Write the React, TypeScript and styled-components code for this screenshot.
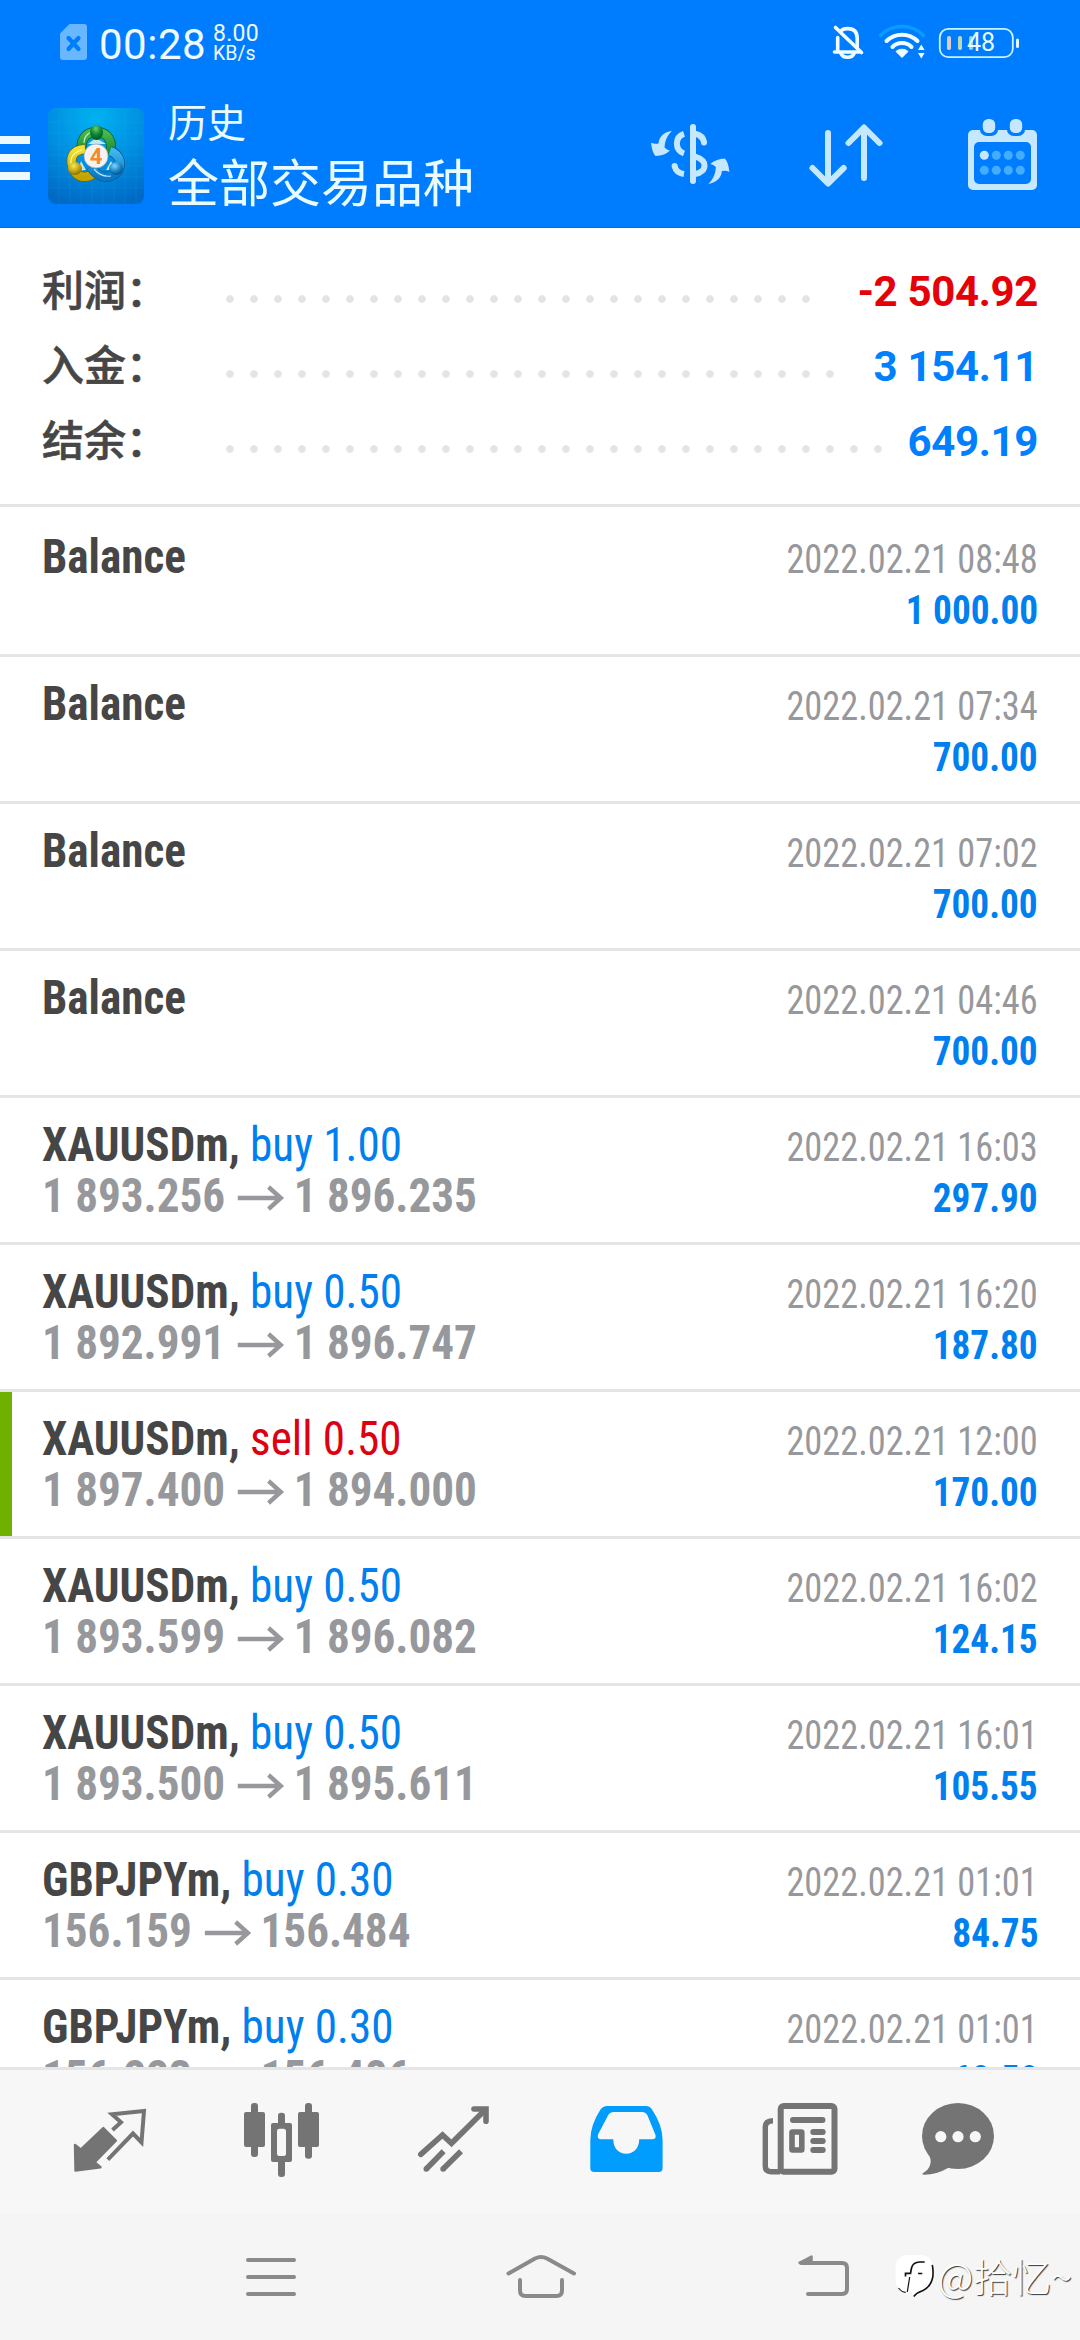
import React from "react";
import styled, { createGlobalStyle } from "styled-components";

const BLUE = "#007fef";
const RED = "#dc0010";
const GRAY = "#97989c";
const LINE = "#e5e5e5";
const ICON_LIGHT = "#c6e8ff";
const TAB_GRAY = "#747474";
const CJK = '"Noto Sans CJK SC", sans-serif';
const CONDENSED = '"Roboto Condensed", Roboto, sans-serif';

const GlobalStyle = createGlobalStyle`
  html, body { margin: 0; padding: 0; background: #ffffff; }
  * { box-sizing: border-box; }
`;

const Screen = styled.div`
  width: 1080px;
  height: 2340px;
  display: flex;
  flex-direction: column;
  overflow: hidden;
  background: #ffffff;
  font-family: Roboto, "Noto Sans CJK SC", sans-serif;
`;

const Header = styled.header`
  height: 228px;
  flex: none;
  background: #007dff;
  border-bottom: 1px solid #0070e4;
`;

const StatusBar = styled.div`
  height: 84px;
  display: flex;
  justify-content: space-between;
  padding: 0 60px 0 60px;
  color: #eefaff;
`;

const StatusGroup = styled.div`
  display: flex;
  align-items: center;
`;

const Clock = styled.span`
  margin-left: 12px;
  width: 112px;
  font-size: 42px;
  line-height: 60px;
  letter-spacing: 0.5px;
  padding-top: 5px;
`;

const Speed = styled.div`
  display: flex;
  flex-direction: column;
  margin-left: 2px;
  padding-top: 3px;
  font-size: 19.5px;
  line-height: 20px;
`;

const SpeedValue = styled.span`
  font-size: 23px;
  letter-spacing: 0.3px;
`;

const AppBar = styled.div`
  height: 144px;
  display: flex;
  align-items: center;
  padding-right: 36px;
`;

const MenuBars = styled.div`
  width: 30px;
  display: flex;
  flex-direction: column;
  gap: 10px;
  padding-top: 4px;
`;

const MenuBar = styled.span`
  height: 8px;
  background: #eef9ff;
`;

const LogoSvg = styled.svg`
  width: 96px;
  height: 96px;
  margin-left: 18px;
`;

const Titles = styled.div`
  flex: 1;
  margin-left: 24px;
  padding-bottom: 6px;
  color: #e9fbff;
  font-family: ${CJK};
  font-weight: 400;
`;

const Subtitle = styled.div`
  font-size: 39px;
  line-height: 54px;
`;

const Title = styled.div`
  font-size: 51px;
  line-height: 66px;
`;

const ActionIcon = styled.svg`
  width: 84px;
  height: 84px;
  margin-bottom: 4px;
  & + & { margin-left: 72px; }
`;

const Summary = styled.section`
  height: 279px;
  flex: none;
  padding: 22px 42px 0;
  border-bottom: 3px solid ${LINE};
`;

const SummaryRow = styled.div`
  display: flex;
  align-items: baseline;
  height: 75px;
  line-height: 75px;
`;

const SummaryLabel = styled.span`
  width: 176px;
  font-family: ${CJK};
  font-size: 42px;
  font-weight: 500;
  -webkit-text-stroke: 0.6px #464646;
  color: #464646;
`;

const Dots = styled.span<{ $count: number }>`
  width: ${(p) => p.$count * 24}px;
  height: 8px;
  align-self: flex-start;
  margin-top: 45px;
  background: radial-gradient(circle at 12px 4px, #e4e4e4 3.4px, transparent 4.2px) 0 0 / 24px 8px repeat-x;
`;

const Amount = styled.span<{ $negative?: boolean }>`
  margin-left: auto;
  font-size: 42px;
  font-weight: 700;
  letter-spacing: -0.35px;
  color: ${(p) => (p.$negative ? "#e60008" : "#007fff")};
`;

const List = styled.main`
  flex: 1;
  min-height: 0;
  overflow: hidden;
  padding-top: 3px;
`;

const Deal = styled.article<{ $marked?: boolean }>`
  height: 147px;
  display: flex;
  justify-content: space-between;
  padding: 21px 42px 0 42px;
  border-bottom: 3px solid ${LINE};
  background: ${(p) => (p.$marked ? "linear-gradient(#6fb000, #6fb000) 0 0 / 12px 100% no-repeat" : "none")};
  font-family: ${CONDENSED};
  font-stretch: 75%;
  line-height: 51px;
`;

const DealInfo = styled.div`
  display: flex;
  flex-direction: column;
  font-size: 48px;
  transform: scaleX(0.94);
  transform-origin: left;
`;

const Symbol = styled.div`
  font-weight: 700;
  color: #464646;
`;

const Side = styled.span<{ $sell?: boolean }>`
  font-weight: 400;
  color: ${(p) => (p.$sell ? RED : BLUE)};
`;

const Prices = styled.div`
  display: flex;
  align-items: center;
  font-weight: 700;
  color: ${GRAY};
`;

const PriceArrow = styled.svg`
  width: 50px;
  height: 28px;
  margin: 5px 10px 0 13px;
`;

const DealResult = styled.div`
  display: flex;
  flex-direction: column;
  align-items: flex-end;
  padding-top: 3px;
  font-size: 40px;
`;

const DateText = styled.span`
  transform: scaleX(0.908);
  transform-origin: right;
  color: ${GRAY};
`;

const Profit = styled.span`
  transform: scaleX(0.932);
  transform-origin: right;
  font-weight: 700;
  color: ${BLUE};
`;

const TabBar = styled.nav`
  height: 147px;
  flex: none;
  display: grid;
  grid-template-columns: repeat(4, 172px) 176px 140px;
  padding: 30px 0 0 24px;
  border-top: 3px solid ${LINE};
  background: #f7f7f7;
`;

const TabIcon = styled.svg`
  width: 80px;
  height: 80px;
  justify-self: center;
`;

const SystemNav = styled.footer`
  height: 126px;
  flex: none;
  position: relative;
  display: grid;
  grid-template-columns: 270px 270px 296px;
  align-items: center;
  padding-left: 136px;
  background: #f5f5f5;
`;

const SystemIcon = styled.svg`
  width: 80px;
  height: 80px;
  justify-self: center;
`;

const Watermark = styled.div`
  position: absolute;
  right: 8px;
  top: 36px;
  display: flex;
  align-items: center;
  gap: 2px;
  height: 54px;
  font-family: ${CJK};
  font-weight: 300;
  font-size: 39px;
  line-height: 54px;
  color: #ffffff;
  text-shadow: 1px 1px 1px #333333;
`;

const WatermarkText = styled.span`
  margin-top: -5px;
`;

type DealData = {
  symbol: string;
  side?: "buy" | "sell";
  volume?: string;
  open?: string;
  close?: string;
  time: string;
  profit: string;
  marked?: boolean;
};

const deals: DealData[] = [
  { symbol: "Balance", time: "08:48", profit: "1 000.00" },
  { symbol: "Balance", time: "07:34", profit: "700.00" },
  { symbol: "Balance", time: "07:02", profit: "700.00" },
  { symbol: "Balance", time: "04:46", profit: "700.00" },
  { symbol: "XAUUSDm", side: "buy", volume: "1.00", open: "1 893.256", close: "1 896.235", time: "16:03", profit: "297.90" },
  { symbol: "XAUUSDm", side: "buy", volume: "0.50", open: "1 892.991", close: "1 896.747", time: "16:20", profit: "187.80" },
  { symbol: "XAUUSDm", side: "sell", volume: "0.50", open: "1 897.400", close: "1 894.000", time: "12:00", profit: "170.00", marked: true },
  { symbol: "XAUUSDm", side: "buy", volume: "0.50", open: "1 893.599", close: "1 896.082", time: "16:02", profit: "124.15" },
  { symbol: "XAUUSDm", side: "buy", volume: "0.50", open: "1 893.500", close: "1 895.611", time: "16:01", profit: "105.55" },
  { symbol: "GBPJPYm", side: "buy", volume: "0.30", open: "156.159", close: "156.484", time: "01:01", profit: "84.75" },
  { symbol: "GBPJPYm", side: "buy", volume: "0.30", open: "156.223", close: "156.486", time: "01:01", profit: "68.58" },
];

const totals = [
  { label: "利润：", dots: 25, value: "-2 504.92", negative: true },
  { label: "入金：", dots: 26, value: "3 154.11", negative: false },
  { label: "结余：", dots: 28, value: "649.19", negative: false },
];

function SimIcon() {
  return (
    <svg width="27" height="36" viewBox="0 0 27 36">
      <path d="M9.5 0H24a3 3 0 0 1 3 3v30a3 3 0 0 1-3 3H3a3 3 0 0 1-3-3V9.5z" fill="#69b8ff" />
      <path d="M8.500 14l10 11M18.500 14l-10 11" stroke="#007dff" strokeWidth="4.200" strokeLinecap="round" />
    </svg>
  );
}

function StatusIcons() {
  return (
    <svg width="190" height="44" viewBox="830 20 190 44" fill="none">
      <g stroke="#f0fcff" strokeWidth="3.600" strokeLinecap="round" strokeLinejoin="round">
        <path d="M834.500 52H859M837.700 51V37.500M857.200 48V38.500C857.200 31.500 853.500 28.600 848 28.600C845 28.600 843 29 841.500 30.500" />
        <path d="M841 53.500C843 58.500 852 58.500 854 53.500" />
        <path d="M835.500 27.500L861.500 52.500" />
      </g>
      <path d="M880.500 35.500C892 23.500 912 23.500 923.500 35.500" stroke="#0a9bff" strokeWidth="3.600" strokeLinecap="round" />
      <g stroke="#f0fcff" strokeWidth="4" strokeLinecap="round">
        <path d="M886.500 41C895 32.500 909 32.500 917.500 41" />
        <path d="M892.500 47C897.500 41.800 906.500 41.800 911.500 47" />
      </g>
      <path d="M896 51.500C899 48.500 905 48.500 908 51.500L902 57.500z" fill="#f0fcff" stroke="#f0fcff" strokeLinejoin="round" />
      <path d="M918 50l3.300-5.500 3.300 5.500zM918 53h6.600l-3.300 5.500z" fill="#f0fcff" />
      <rect x="939.800" y="28.800" width="73" height="28.400" rx="8.500" stroke="#c9f4ff" strokeWidth="1.800" />
      <rect x="1016" y="38.500" width="3" height="9.500" rx="1.500" fill="#dff8ff" />
      <rect x="947" y="36" width="4" height="14" rx="1.800" fill="#d8cbd4" />
      <rect x="958" y="36" width="4" height="14" rx="1.800" fill="#bfd8b0" />
      <rect x="969" y="36" width="4" height="14" rx="1.800" fill="#8fd0e8" />
      <text x="967" y="50.700" fontFamily="Roboto, sans-serif" fontSize="25" fill="#e6fbff">48</text>
    </svg>
  );
}

function Logo() {
  return (
    <LogoSvg viewBox="0 0 96 96">
      <defs>
        <radialGradient id="tile" cx="0.5" cy="0.1" r="0.95">
          <stop offset="0" stopColor="#00b2f0" />
          <stop offset="0.5" stopColor="#0090e2" />
          <stop offset="1" stopColor="#0069c4" />
        </radialGradient>
        <linearGradient id="green" x1="0" y1="0" x2="0" y2="1">
          <stop offset="0" stopColor="#4db84a" />
          <stop offset="1" stopColor="#0d8435" />
        </linearGradient>
        <linearGradient id="yellow" x1="0" y1="0" x2="0" y2="1">
          <stop offset="0" stopColor="#f3e234" />
          <stop offset="1" stopColor="#c2a400" />
        </linearGradient>
        <linearGradient id="blue" x1="0" y1="0" x2="0" y2="1">
          <stop offset="0" stopColor="#42b6ee" />
          <stop offset="1" stopColor="#0878c4" />
        </linearGradient>
        <radialGradient id="headGreen" cx="0.45" cy="0.25" r="0.75">
          <stop offset="0" stopColor="#6fce72" />
          <stop offset="0.5" stopColor="#0f8a35" />
          <stop offset="1" stopColor="#04551f" />
        </radialGradient>
        <radialGradient id="headYellow" cx="0.4" cy="0.3" r="0.75">
          <stop offset="0" stopColor="#f6e862" />
          <stop offset="0.6" stopColor="#bda00a" />
          <stop offset="1" stopColor="#7d6800" />
        </radialGradient>
        <radialGradient id="headBlue" cx="0.4" cy="0.3" r="0.75">
          <stop offset="0" stopColor="#86d4f8" />
          <stop offset="0.6" stopColor="#1280c8" />
          <stop offset="1" stopColor="#074a80" />
        </radialGradient>
      </defs>
      <rect width="96" height="96" rx="8" fill="url(#tile)" />
      <path d="M11 0V96M22 0V96M33 0V96M44 0V96M55 0V96M66 0V96M77 0V96M88 0V96M0 14H96M0 25H96M0 36H96M0 47H96M0 58H96M0 69H96M0 80H96" stroke="#3dc0ff" strokeOpacity="0.14" strokeWidth="0.800" />
      <g fill="none">
        <path d="M34.500 46C31 33 37 24 48.500 24C60 24 66 34 61.500 47" stroke="#075c32" strokeWidth="10" />
        <path d="M34.500 46C31 33 37 24 48.500 24C60 24 66 34 61.500 47" stroke="url(#green)" strokeWidth="8.400" />
        <path d="M37 41C23 42 21 52 26 62C30 70 39 71 46 65" stroke="#6f6a12" strokeWidth="10" />
        <path d="M37 41C23 42 21 52 26 62C30 70 39 71 46 65" stroke="url(#yellow)" strokeWidth="8.400" />
        <path d="M43 59C49 69 60 72 68 65C75 58 73 47 62 43" stroke="#075b93" strokeWidth="10" />
        <path d="M43 59C49 69 60 72 68 65C75 58 73 47 62 43" stroke="url(#blue)" strokeWidth="8.400" />
        <path d="M36 35C36 27 42 23 50 23" stroke="#b8f0b0" strokeWidth="1.200" />
        <path d="M23 56C22 48 27 44 34 42" stroke="#fff9a0" strokeWidth="1.200" />
        <path d="M46 61C51 67 57 69 63 68" stroke="#b5e8ff" strokeWidth="1.200" />
      </g>
      <path d="M48 30L58 36L40 36ZM33 53L38 62L30 63ZM63 53L58 62L67 62Z" fill="#e6f5e0" fillOpacity="0.850" />
      <ellipse cx="48.500" cy="24.500" rx="6.500" ry="7.500" fill="url(#headGreen)" />
      <ellipse cx="27" cy="60.500" rx="7" ry="6.500" fill="url(#headYellow)" />
      <ellipse cx="68" cy="60.500" rx="7" ry="6.500" fill="url(#headBlue)" />
      <circle cx="48" cy="48" r="12" fill="#f4f3f1" stroke="#a8abb0" strokeWidth="0.800" />
      <text x="48" y="55.500" textAnchor="middle" fontFamily="Roboto, sans-serif" fontWeight="700" fontSize="22" fill="#f58a2c">4</text>
    </LogoSvg>
  );
}

function CurrencyIcon() {
  const arrow = "M24 18.700C16 20 11 24.500 10.500 31.500Q6.500 32.500 3 30.700Q4 40 7.500 44Q17 43.500 22 38.500Q19 38 16.500 35.500C17 28 19.500 23 24 18.700Z";
  return (
    <ActionIcon viewBox="0 0 84 84" fill={ICON_LIGHT}>
      <rect x="42" y="12" width="6" height="60" rx="3" />
      <g fill="none" stroke={ICON_LIGHT} strokeWidth="6">
        <path d="M36 21.800C26.500 25 26.500 38 36 41.500" />
        <path d="M47 21.700C52.500 22.800 55.500 26 56 30.500" />
        <path d="M47 44.500C53.500 46.500 56.500 49.500 56.500 53.500S53.500 61 47 62" />
        <path d="M26.600 54C27.500 58.500 31 61.300 36 62" />
      </g>
      <circle cx="56" cy="30.500" r="3" />
      <circle cx="26.600" cy="54" r="3" />
      <path d={arrow} />
      <path d={arrow} transform="rotate(180 42.200 45.300)" />
    </ActionIcon>
  );
}

function SortIcon() {
  return (
    <ActionIcon viewBox="0 0 84 84" fill="none" stroke={ICON_LIGHT} strokeWidth="6" strokeLinecap="round" strokeLinejoin="round">
      <path d="M24 21V71M8.500 56L24 71.500L39.700 56" />
      <path d="M60 66V16M44.500 31L60 15.500L75.500 31" />
    </ActionIcon>
  );
}

function CalendarIcon() {
  return (
    <ActionIcon viewBox="0 0 84 84">
      <rect x="8" y="18" width="69" height="60" rx="5" fill={ICON_LIGHT} />
      <rect x="14" y="30" width="57" height="42" rx="5" fill="#007dff" />
      {[29, 56].map((x) => (
        <g key={x}>
          <rect x={x - 9.2} y="8" width="18.400" height="16" rx="7" fill="#007dff" />
          <rect x={x - 6.2} y="7" width="12.400" height="14" rx="5.500" fill={ICON_LIGHT} />
        </g>
      ))}
      {[43.3, 58.3].map((y) =>
        [24.3, 36.3, 48.3, 60.3].map((x) => (
          <circle key={`${x}-${y}`} cx={x} cy={y} r="4.500" fill={x === 24.3 && y === 43.3 ? ICON_LIGHT : "#43adff"} />
        ))
      )}
    </ActionIcon>
  );
}

function TradeIcon() {
  return (
    <TabIcon viewBox="0 0 80 80">
      <path d="M33.300 28L45.800 40.700L24.500 62.300L30.500 67.200L5.500 70.500L5 45L10.700 49.500Z" fill={TAB_GRAY} stroke={TAB_GRAY} strokeWidth="2.400" strokeLinejoin="round" />
      <path d="M42.500 30L51 22.300L42 14.300L74 11L71.500 42.300L63 33.500L37.800 59.700" fill="none" stroke={TAB_GRAY} strokeWidth="4" />
    </TabIcon>
  );
}

function CandlesIcon() {
  return (
    <TabIcon viewBox="0 0 80 80" fill={TAB_GRAY}>
      <rect x="2" y="12" width="21" height="35" rx="2" />
      <rect x="9" y="3" width="7" height="54" rx="3" />
      <rect x="36" y="12.700" width="7" height="64.300" rx="3" />
      <rect x="29" y="23" width="21" height="39" rx="2" />
      <rect x="35" y="28.700" width="9" height="27.300" rx="2.500" fill="#f7f7f7" />
      <rect x="56" y="12" width="21" height="35" rx="2" />
      <rect x="63" y="3" width="7" height="55.700" rx="3" />
    </TabIcon>
  );
}

function ChartIcon() {
  return (
    <TabIcon viewBox="0 0 80 80" fill="none" stroke={TAB_GRAY} strokeWidth="5.600">
      <path d="M6.800 54.300L28.500 35L37.500 43.300L71 10" strokeLinecap="round" strokeLinejoin="miter" />
      <path d="M60 9H72V21.300" strokeLinecap="round" />
      <path d="M12 69.300L29.600 51.300M28.800 69.300L47 51.300" />
      <circle cx="12.300" cy="69" r="2.800" fill={TAB_GRAY} stroke="none" />
      <circle cx="29.100" cy="69" r="2.800" fill={TAB_GRAY} stroke="none" />
    </TabIcon>
  );
}

function InboxIcon() {
  return (
    <TabIcon viewBox="0 0 80 80">
      <path
        fillRule="evenodd"
        fill="#009dff"
        d="M21 6H60Q64 6 66 9.500Q76.500 25 76.600 40V68Q76.600 72 72.600 72H8.300Q4.300 72 4.300 68V40Q4.400 25 14.500 9.500Q17 6 21 6ZM28 12Q23.500 12 22 15.500L12 34.500Q11 39.300 15 39.300H27.300C27.300 48.500 33 53.800 40.200 53.800S53.200 48.500 53.200 39.300H66Q70.500 39.300 69.500 35L61.500 15.500Q60 12 56 12Z"
      />
    </TabIcon>
  );
}

function NewsIcon() {
  return (
    <TabIcon viewBox="0 0 80 80" fill="none" stroke={TAB_GRAY} strokeWidth="6">
      <rect x="20.700" y="6" width="53.800" height="65.700" rx="3" />
      <path d="M13 20.800Q5.300 21 5.300 27V66Q5.300 71.700 11 71.700H20" strokeWidth="5.400" />
      <path d="M33 20H62.500M53.300 32H62.700M53.300 41H62.700M53.300 50H62.700" strokeLinecap="round" />
      <rect x="32" y="32" width="9.800" height="18" rx="0.500" strokeWidth="5.600" strokeLinejoin="round" />
    </TabIcon>
  );
}

function ChatIcon() {
  return (
    <TabIcon viewBox="0 0 80 80" fill={TAB_GRAY}>
      <ellipse cx="40" cy="36" rx="36" ry="33" />
      <path d="M10 54C15 60 13 69 4.500 73.500Q4 74.800 6 74.800Q18 75 31 67.500Z" />
      {[22.8, 40, 57.3].map((x) => (
        <circle key={x} cx={x} cy="36.700" r="5.600" fill="#f7f7f7" />
      ))}
    </TabIcon>
  );
}

function SystemIcons() {
  const stroke = { fill: "none", stroke: "#8a8a8a", strokeWidth: 4, strokeLinecap: "round" as const, strokeLinejoin: "round" as const };
  return (
    <>
      <SystemIcon viewBox="0 0 80 80" {...stroke}>
        <path d="M17 23H63M17 40H63M17 57H63" />
      </SystemIcon>
      <SystemIcon viewBox="0 0 80 80" {...stroke}>
        <path d="M7.500 36.500L34 21.500Q40 18.500 46 21.500L73 36.500M19 43V53.500Q19 59 24.500 59H55.500Q61 59 61 53.500V43" />
      </SystemIcon>
      <SystemIcon viewBox="0 0 80 80" {...stroke}>
        <path d="M24 57H58Q63 57 63 52V31Q63 26 58 26H17" />
        <path d="M15.500 25.800L27.500 19.500V25.800Z" fill="#8a8a8a" strokeWidth="2.500" />
      </SystemIcon>
    </>
  );
}

function WatermarkBadge() {
  return (
    <svg width="41" height="44" viewBox="0 0 41 44" fill="none">
      <path d="M14 0H25Q37.500 0 37.500 13V22Q37 33 27 36Q22 38 18 42L17.500 37.500H12Q1 36 0.500 24V13Q1 0 14 0Z" fill="#ffffff" />
      <g stroke="#111111">
        <path d="M37.300 10Q38.500 16 37.800 22Q36 31.500 28 35.500Q22 37.500 18.700 41.500" strokeWidth="1.600" />
        <path d="M3.500 33Q6.500 37 10.700 37.300" strokeWidth="1.200" />
        <path d="M14.700 22L12.300 37" strokeWidth="1.200" />
        <path d="M29.700 7H24.500Q18 7.200 16.500 13L15.500 18.300H10.500V21.500M23 18.500H27.300" strokeWidth="1.700" />
      </g>
    </svg>
  );
}

function DealRow({ deal }: { deal: DealData }) {
  return (
    <Deal $marked={deal.marked}>
      <DealInfo>
        <Symbol>
          {deal.symbol}
          {deal.side && (
            <>
              {", "}
              <Side $sell={deal.side === "sell"}>{`${deal.side} ${deal.volume}`}</Side>
            </>
          )}
        </Symbol>
        {deal.open && (
          <Prices>
            {deal.open}
            <PriceArrow viewBox="0 0 50 28" fill="none" stroke={GRAY} strokeWidth="4.600">
              <path d="M0 14H46M33 3L46 14L33 25" />
            </PriceArrow>
            {deal.close}
          </Prices>
        )}
      </DealInfo>
      <DealResult>
        <DateText>{`2022.02.21 ${deal.time}`}</DateText>
        <Profit>{deal.profit}</Profit>
      </DealResult>
    </Deal>
  );
}

export default function App() {
  return (
    <>
      <GlobalStyle />
      <Screen>
        <Header>
          <StatusBar>
            <StatusGroup>
              <SimIcon />
              <Clock>00:28</Clock>
              <Speed>
                <SpeedValue>8.00</SpeedValue>
                <span>KB/s</span>
              </Speed>
            </StatusGroup>
            <StatusGroup>
              <StatusIcons />
            </StatusGroup>
          </StatusBar>
          <AppBar>
            <MenuBars>
              <MenuBar />
              <MenuBar />
              <MenuBar />
            </MenuBars>
            <Logo />
            <Titles>
              <Subtitle>历史</Subtitle>
              <Title>全部交易品种</Title>
            </Titles>
            <CurrencyIcon />
            <SortIcon />
            <CalendarIcon />
          </AppBar>
        </Header>
        <Summary>
          {totals.map((t) => (
            <SummaryRow key={t.label}>
              <SummaryLabel>{t.label}</SummaryLabel>
              <Dots $count={t.dots} />
              <Amount $negative={t.negative}>{t.value}</Amount>
            </SummaryRow>
          ))}
        </Summary>
        <List>
          {deals.map((d, i) => (
            <DealRow key={i} deal={d} />
          ))}
        </List>
        <TabBar>
          <TradeIcon />
          <CandlesIcon />
          <ChartIcon />
          <InboxIcon />
          <NewsIcon />
          <ChatIcon />
        </TabBar>
        <SystemNav>
          <SystemIcons />
          <Watermark>
            <WatermarkBadge />
            <WatermarkText>@拾忆~</WatermarkText>
          </Watermark>
        </SystemNav>
      </Screen>
    </>
  );
}
